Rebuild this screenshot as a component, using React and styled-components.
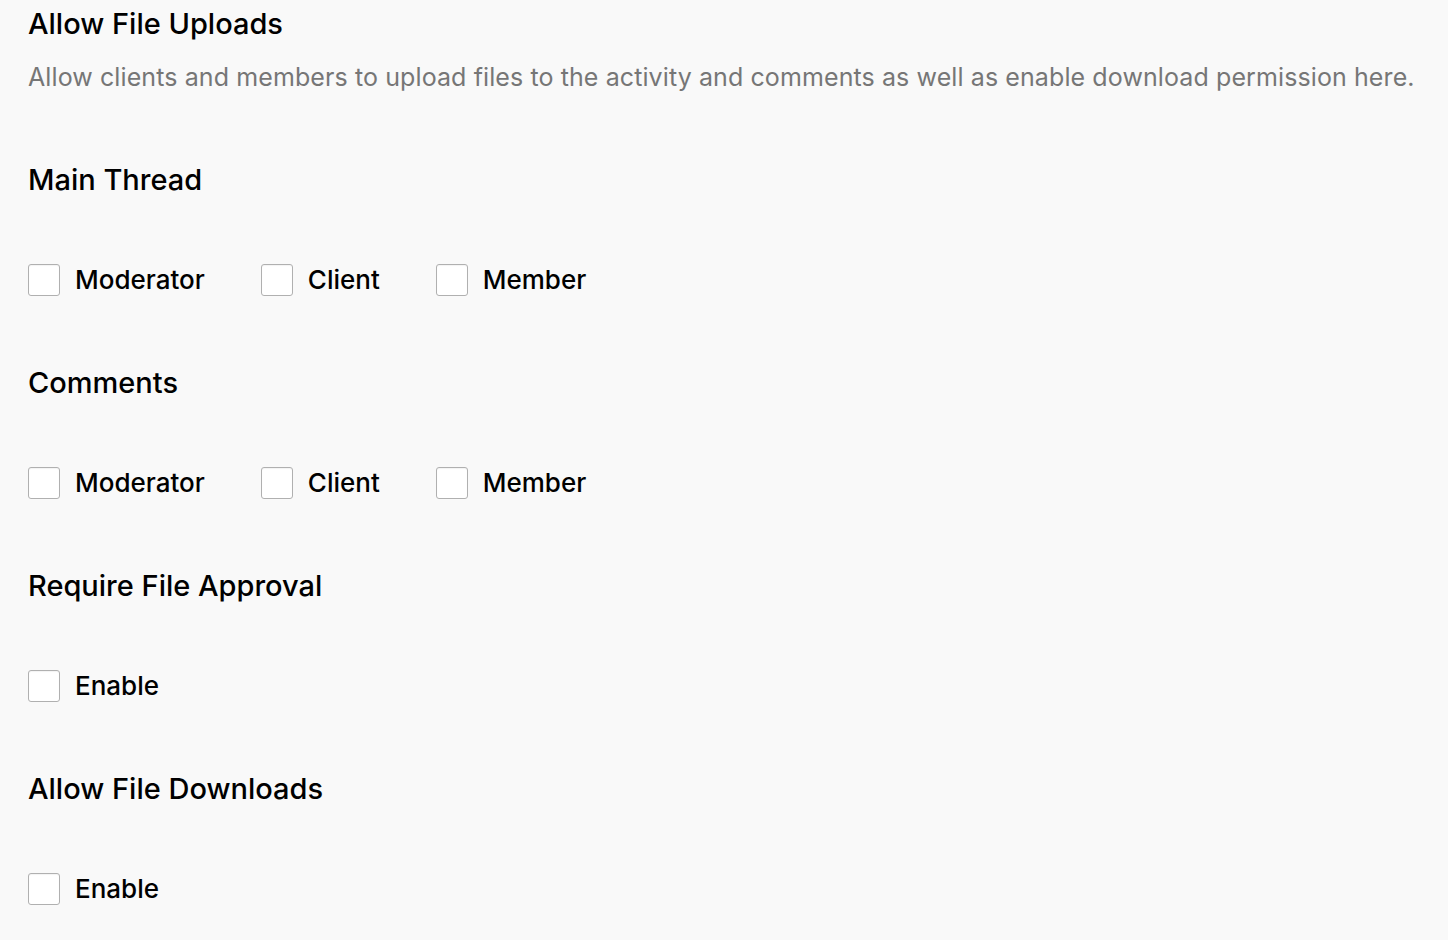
import React from 'react';
import styled, { createGlobalStyle } from 'styled-components';

const GlobalStyle = createGlobalStyle`
  body {
    margin: 0;
    background-color: #f9f9f9;
    font-family: Inter, 'Noto Sans', sans-serif;
  }
`;

const PAGE = styled.div`
  padding: 4px 28px 0 28px;
  display: flex;
  flex-direction: column;
`;

const TITLE = styled.h2`
  margin: 0;
  font-size: 29px;
  line-height: 40px;
  font-weight: 500;
  color: #000;
`;

const DESC = styled.p`
  margin: 13px 0 0 0;
  font-size: 25px;
  line-height: 40px;
  letter-spacing: 0.1px;
  color: #767676;
`;

const SECTION = styled.section`
  margin-top: ${(p) => p.top}px;
  display: flex;
  flex-direction: column;
  gap: 59px;
`;

const ROW = styled.div`
  display: flex;
  align-items: center;
  gap: 56px;
`;

const OPTION = styled.label`
  display: flex;
  align-items: center;
  gap: 15px;
  font-size: 26px;
  font-weight: 500;
  color: #000;
  line-height: 42px;
`;

const BOX = styled.span`
  width: 30px;
  height: 30px;
  border: 1px solid #b0b0b0;
  border-radius: 3px;
  background: #fff;
  box-shadow: inset 0 1px 1px rgba(0, 0, 0, 0.05);
`;

const sections = [
  { title: 'Main Thread', options: ['Moderator', 'Client', 'Member'] },
  { title: 'Comments', options: ['Moderator', 'Client', 'Member'] },
  { title: 'Require File Approval', options: ['Enable'] },
  { title: 'Allow File Downloads', options: ['Enable'] },
];

export default function App() {
  return (
    <PAGE>
      <GlobalStyle />
      <TITLE>Allow File Uploads</TITLE>
      <DESC>
        Allow clients and members to upload files to the activity and comments as well as enable download permission here.
      </DESC>
      {sections.map((s, i) => (
        <SECTION key={s.title} top={i === 0 ? 63 : 62}>
          <TITLE>{s.title}</TITLE>
          <ROW>
            {s.options.map((o) => (
              <OPTION key={o}>
                <BOX />
                {o}
              </OPTION>
            ))}
          </ROW>
        </SECTION>
      ))}
    </PAGE>
  );
}
